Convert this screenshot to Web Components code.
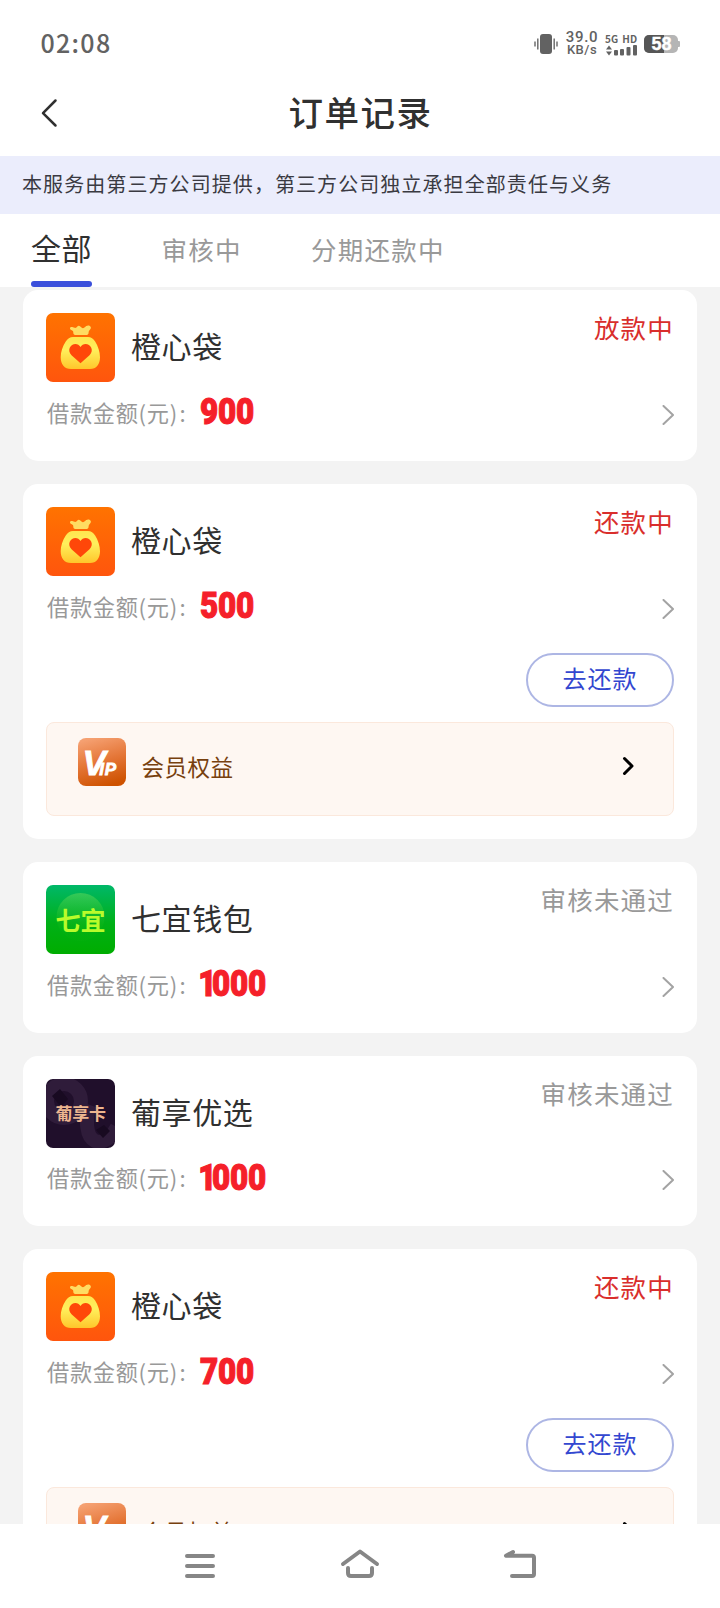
<!DOCTYPE html>
<html lang="zh-CN">
<head>
<meta charset="utf-8">
<title>订单记录</title>
<style>
html,body{margin:0;height:100%}
body{font-family:"Noto Sans CJK SC","Noto Sans",sans-serif;color:#333;background:#fff;overflow:hidden}
</style>
</head>
<body>
<order-page></order-page>
<script>
const define = (name, html, setup) => {
  const t = document.createElement('template');
  t.innerHTML = html;
  customElements.define(name, class extends HTMLElement {
    constructor() {
      super();
      this.attachShadow({mode: 'open'}).appendChild(t.content.cloneNode(true));
    }
    connectedCallback() { if (setup) setup(this, this.shadowRoot); }
  });
};

define('status-bar', `
<style>
:host{display:flex;height:78px;box-sizing:border-box;padding:10px 40px 0 40px;align-items:center;justify-content:space-between;color:#626262}
.time{font-size:25px;font-weight:500;letter-spacing:1.3px;line-height:30px;margin-top:-4px;padding-left:.5px}
.right{display:flex;align-items:center;height:30px}
.speed{margin-left:8px;width:32px;font-family:Roboto,sans-serif;font-weight:500;line-height:12px;font-size:15px;letter-spacing:.7px;white-space:nowrap}
.speed div{display:flex;justify-content:center}
.speed div+div{font-size:13px;letter-spacing:.5px;line-height:14px}
.net{margin-left:7px;width:33px;font-size:10px;font-weight:700;line-height:11px;white-space:nowrap;word-spacing:2px}
.net svg{display:block;margin-top:1px}
.bat{margin-left:6px;width:36px;height:20px;display:grid}
.bat>*{grid-area:1/1}
.bat span{color:#fff;font:700 18px/21px "Liberation Sans",sans-serif;text-align:center;padding-right:1px;-webkit-text-stroke:.4px #fff}
</style>
<div class="time">02:08</div>
<div class="right">
<svg width="24" height="22" viewBox="0 0 24 22"><rect x="6" y="1" width="12" height="20" rx="3" fill="#626262"/><path d="M3.800 5.500v11M1 8.500v5M20.200 5.500v11M23 8.500v5" stroke="#707070" stroke-width="1.5"/></svg>
<div class="speed"><div>39.0</div><div>KB/s</div></div>
<div class="net">5G HD<svg width="33" height="11" viewBox="0 0 33 11" fill="#626262"><path d="M1 4.500 4 .500l3 4zM1 6.500l3 4 3-4z"/><rect x="9" y="5" width="4" height="5.500" rx="1"/><rect x="15" y="4" width="4" height="6.500" rx="1"/><rect x="21.500" y="2" width="4" height="8.500" rx="1"/><rect x="28" y="0" width="4" height="10.500" rx="1"/></svg></div>
<div class="bat"><svg width="36" height="20" viewBox="0 0 36 20"><rect x="0" y="1" width="34" height="18" rx="5" fill="#b5b5b5"/><path d="M5 1h15v18H5a5 5 0 0 1-5-5V6a5 5 0 0 1 5-5z" fill="#565656"/><rect x="33" y="7" width="3" height="6" rx="1" fill="#b5b5b5"/></svg><span>58</span></div>
</div>`);

define('page-header', `
<style>
:host{display:grid;grid-template-columns:80px 1fr 80px;height:78px;align-items:center}
svg{margin-left:40px;display:block}
h1{margin:0;font-size:34.500px;font-weight:500;letter-spacing:1.500px;text-align:center;line-height:40px;padding-bottom:12px;padding-left:1px;color:#303030}
</style>
<svg width="18" height="30" viewBox="0 0 18 30" style="margin-bottom:8px"><path d="M15.500 2.500 3 15.200l12.500 12.300" fill="none" stroke="#303030" stroke-width="2.500" stroke-linecap="round" stroke-linejoin="round"/></svg>
<h1><slot></slot></h1>`);

define('notice-bar', `
<style>:host{display:block;height:58px;background:#ebedfc;padding-left:22px;font-size:20px;letter-spacing:1.080px;line-height:55px;color:#3a3a42;white-space:nowrap}</style><slot></slot>`);

define('tab-bar', `
<style>:host{display:flex;height:73px;padding-left:31px;background:#fff}</style><slot></slot>`);

define('tab-item', `
<style>
:host{display:flex;flex-direction:column;justify-content:space-between;font-size:25.500px;letter-spacing:1.200px;color:#999;margin-right:69.500px;height:73px}
:host([active]){font-size:30px;letter-spacing:.5px;color:#303030}
div{height:67px;line-height:70px;white-space:nowrap}
i{display:block;height:6px;border-radius:3px}
:host([active]) div{line-height:67px}
:host([active]) i{background:#3a4fdb}
</style><div><slot></slot></div><i></i>`);

const logos = {
  bag: `<defs><linearGradient id="o" x2="0" y2="1"><stop stop-color="#ff7300"/><stop offset="1" stop-color="#ff550d"/></linearGradient><linearGradient id="y" x2="0" y2="1"><stop stop-color="#ffe650"/><stop offset=".4" stop-color="#fff05c"/><stop offset="1" stop-color="#ffc62b"/></linearGradient></defs>
<rect width="69" height="69" fill="url(#o)"/>
<path d="M24 15.500c0-1.500 1.500-1.800 3-1.300l1.500.600c1.200.400 2-.300 2.600-1.100.900-1.200 2.200-1.400 3.200-.300l1.500 1.400c.900.800 1.700.500 2.600-.300l1.900-1.500c1.300-1 3.400-.8 4.300.7.600 1 .3 2-.5 2.700-1 1-1.500 1.700-1.500 3.200 0 1.700-.6 2.400-2 2.400H29.300c-1.500 0-2-.8-2-2.400 0-1.300-.5-1.800-1.500-2.300-.8-.400-1.800-.800-1.800-1.800z" fill="#ffdc62"/>
<path d="M27 24h15c3 0 5.500 1.800 7.300 4.800 2.700 4.500 4.700 10 4.700 15.500C54 51.500 50.500 56 44 56H25c-6.600 0-10.300-4.500-10.300-11.700 0-5.500 2-11 4.900-15.500C21.500 25.800 24 24 27 24z" fill="url(#y)"/>
<path d="M34.500 50.300 25.500 42.200c-5-5-1-11.200 4-11.200 2 0 3.800 1.200 5 3 1.200-1.800 3-3 5-3 5 0 9 6.200 4 11.200z" fill="#ff4709"/>`,
  qiyi: `<defs><linearGradient id="g" x2="0" y2="1"><stop stop-color="#00b869"/><stop offset=".55" stop-color="#00b017"/><stop offset="1" stop-color="#00ad00"/></linearGradient><linearGradient id="c" x2="0" y2="1"><stop stop-color="#7fe35c" stop-opacity=".42"/><stop offset=".8" stop-color="#2fbf20" stop-opacity=".05"/></linearGradient></defs>
<rect width="69" height="69" fill="url(#g)"/><circle cx="34.500" cy="32" r="24" fill="url(#c)"/>
<text x="9.500" y="44.500" font-size="25" font-weight="700" fill="#b9fb2b">七宜</text>`,
  puxiang: `<rect width="69" height="69" fill="#200f2b"/><g fill="none" stroke="#2f1c3a" stroke-width="14"><circle cx="18" cy="22" r="17"/><path d="M44 26c-5 14-4 32 5 36 8 3 16-3 22-14"/></g><path d="m6 17 8-7 8 10-7 8zM50 51l8-5 6 6-7 7z" fill="#180a21"/>
<text x="9.500" y="41" font-size="17" font-weight="700" fill="#ecb58f" letter-spacing="-.2">葡享卡</text>`
};

define('app-logo', `
<style>:host{display:block;width:69px;height:69px;border-radius:7px;overflow:hidden}svg{display:block}</style><svg width="69" height="69" viewBox="0 0 69 69"></svg>`,
(el, r) => { r.querySelector('svg').innerHTML = logos[el.getAttribute('name')] || ''; });

define('order-card', `
<style>
:host{display:block;background:#fff;border-radius:15px;padding:23px;flex:none}
.head{display:flex;height:69px}
.name{margin-left:16px;font-size:30px;letter-spacing:.6px;line-height:64px;color:#303030;flex:1}
.state{font-size:25.500px;letter-spacing:1.200px;line-height:28px;color:#999;height:30px}
:host([hot]) .state{color:#d92e2c}
.row{display:flex;align-items:center;height:45.750px;margin-top:10px}
.label{font-size:22.200px;letter-spacing:.700px;color:#999;line-height:40px;margin-left:1px;width:153px;white-space:nowrap;margin-top:-6px;word-spacing:-4px}
.amt{flex:1;height:40px;margin-top:-7px}
.amt b{display:inline-block;font:900 37px/42px Roboto,sans-serif;color:#f52029;transform:scaleX(.85);transform-origin:0 0;letter-spacing:-.3px;-webkit-text-stroke:1.100px #f52029}
.amt i{font-style:normal;letter-spacing:-5.300px;margin-left:-2px}
</style>
<div class="head"><app-logo></app-logo><div class="name"></div><div class="state"></div></div>
<div class="row"><div class="label">借款金额(元) :</div><div class="amt"><b></b></div>
<svg width="12" height="20" viewBox="0 0 12 20"><path d="m1.500 1 9.500 9-9.500 9" fill="none" stroke="#a3a3a3" stroke-width="2" stroke-linecap="round" stroke-linejoin="round"/></svg></div>
<slot></slot>`,
(el, r) => {
  const logo = r.querySelector('app-logo');
  logo.setAttribute('name', el.getAttribute('logo'));
  logo.shadowRoot.querySelector('svg').innerHTML = logos[el.getAttribute('logo')];
  r.querySelector('.name').textContent = el.getAttribute('name');
  r.querySelector('.state').textContent = el.getAttribute('state');
  r.querySelector('b').innerHTML = el.getAttribute('amount').replace(/^1/, '<i>1</i>');
});

define('repay-button', `
<style>
:host{display:flex;justify-content:flex-end;margin-top:21.250px}
button{all:unset;box-sizing:border-box;width:148px;height:54px;border:2px solid #adb6e4;border-radius:27px;text-align:center;font-size:24px;letter-spacing:1px;line-height:44px;padding-bottom:4px;color:#3347d0}
</style><button><slot></slot></button>`);

define('vip-banner', `
<style>
:host{display:flex;box-sizing:border-box;height:94px;margin-top:15px;border:1px solid #fbe8dc;border-radius:8px;background:#fef7f2;padding:15px 38px 0 31px}
.t{flex:1;margin-left:15.500px;font-size:22.500px;letter-spacing:.500px;line-height:57px;color:#77400e}
.a{margin-top:18px}
svg{flex:none}
</style>
<svg width="48" height="48" viewBox="0 0 48 48"><defs><linearGradient id="v" x1=".3" x2=".6" y2="1"><stop stop-color="#f5a071"/><stop offset=".5" stop-color="#e47536"/><stop offset="1" stop-color="#ce5200"/></linearGradient></defs><rect width="48" height="48" rx="8" fill="url(#v)"/><text x="4.500" y="36.500" fill="#fff" font-family="Liberation Sans,sans-serif" font-weight="700" font-style="italic" font-size="35" stroke="#fff" stroke-width=".8">V<tspan font-size="17" dx="-6.500" letter-spacing=".6">IP</tspan></text></svg>
<div class="t"><slot></slot></div>
<svg class="a" width="13" height="20" viewBox="0 0 13 20"><path d="m2.500 2.500 7.500 7.500-7.500 7.500" fill="none" stroke="#000" stroke-width="3" stroke-linecap="round" stroke-linejoin="round"/></svg>`);

define('order-list', `
<style>:host{display:flex;flex-direction:column;gap:23px;flex:1;min-height:0;box-sizing:border-box;overflow:hidden;background:#f3f3f3;padding:3px 23px 0}</style><slot></slot>`);

define('system-nav', `
<style>:host{display:flex;height:84px;background:#fff;justify-content:center;gap:120px}svg{display:block;margin-top:22px}</style>
<svg width="40" height="36" viewBox="0 0 40 36"><path d="M7 10h26M7 20h26M7 30h26" stroke="#868686" stroke-width="4" stroke-linecap="round"/></svg>
<svg width="40" height="36" viewBox="0 0 40 36"><path d="M3 18 20 5.500 37 18M8 22v5q0 3 3 3h18q3 0 3-3v-5" fill="none" stroke="#868686" stroke-width="4" stroke-linecap="round" stroke-linejoin="round"/></svg>
<svg width="40" height="36" viewBox="0 0 40 36"><path d="M13 6 6 9.800h26q2 0 2 2V28q0 2-2 2H12" fill="none" stroke="#868686" stroke-width="4" stroke-linecap="round" stroke-linejoin="round"/></svg>`);

define('order-page', `
<style>:host{display:flex;flex-direction:column;width:720px;height:1608px}</style>
<status-bar></status-bar>
<page-header>订单记录</page-header>
<notice-bar>本服务由第三方公司提供，第三方公司独立承担全部责任与义务</notice-bar>
<tab-bar><tab-item active>全部</tab-item><tab-item>审核中</tab-item><tab-item>分期还款中</tab-item></tab-bar>
<order-list>
<order-card logo="bag" name="橙心袋" state="放款中" amount="900" hot></order-card>
<order-card logo="bag" name="橙心袋" state="还款中" amount="500" hot><repay-button>去还款</repay-button><vip-banner>会员权益</vip-banner></order-card>
<order-card logo="qiyi" name="七宜钱包" state="审核未通过" amount="1000"></order-card>
<order-card logo="puxiang" name="葡享优选" state="审核未通过" amount="1000"></order-card>
<order-card logo="bag" name="橙心袋" state="还款中" amount="700" hot><repay-button>去还款</repay-button><vip-banner>会员权益</vip-banner></order-card>
</order-list>
<system-nav></system-nav>`);
</script>
</body>
</html>
